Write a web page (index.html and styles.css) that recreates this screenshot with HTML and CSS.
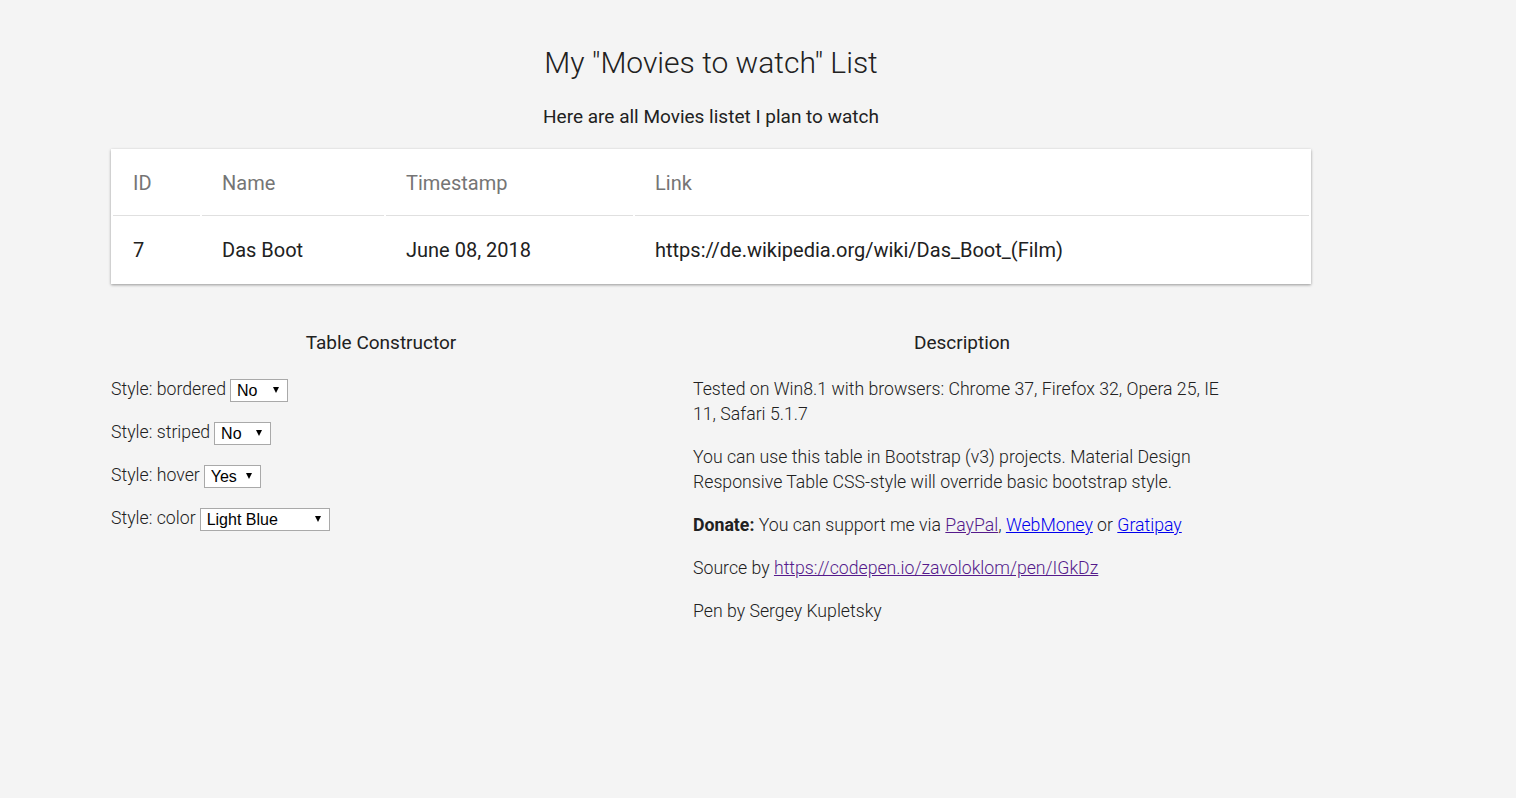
FILE: index.html
```html
<!DOCTYPE html>
<html lang="en">
<head>
<meta charset="utf-8">
<title>Movies to watch</title>
<link rel="stylesheet" href="styles.css">
</head>
<body>
<div class="page">
  <h1 class="title">My "Movies to watch" List</h1>
  <p class="subtitle">Here are all Movies listet I plan to watch</p>

  <div class="table-card">
    <table class="movies">
      <colgroup>
        <col class="c-id"><col class="c-name"><col class="c-time"><col class="c-link">
      </colgroup>
      <thead>
        <tr><th>ID</th><th>Name</th><th>Timestamp</th><th>Link</th></tr>
      </thead>
      <tbody>
        <tr><td>7</td><td>Das Boot</td><td>June 08, 2018</td><td>https://de.wikipedia.org/wiki/Das_Boot_(Film)</td></tr>
      </tbody>
    </table>
  </div>

  <div class="lower">
    <section class="constructor">
      <h2 class="sec-title">Table Constructor</h2>
      <p class="opt">Style: bordered <span class="sel w-no1"><select><option>No</option><option>Yes</option></select></span></p>
      <p class="opt">Style: striped <span class="sel w-no2"><select><option>No</option><option>Yes</option></select></span></p>
      <p class="opt">Style: hover <span class="sel w-yes"><select><option>Yes</option><option>No</option></select></span></p>
      <p class="opt">Style: color <span class="sel w-color"><select><option>Light Blue</option><option>Default</option></select></span></p>
    </section>
    <section class="description">
      <h2 class="sec-title">Description</h2>
      <p>Tested on Win8.1 with browsers: Chrome 37, Firefox 32, Opera 25, IE 11, Safari 5.1.7</p>
      <p>You can use this table in Bootstrap (v3) projects. Material Design Responsive Table CSS-style will override basic bootstrap style.</p>
      <p><b>Donate:</b> You can support me via <a class="visited" href="#paypal">PayPal</a>, <a class="fresh" href="#webmoney">WebMoney</a> or <a class="fresh" href="#gratipay">Gratipay</a></p>
      <p>Source by <a class="visited" href="#codepen">https://codepen.io/zavoloklom/pen/IGkDz</a></p>
      <p>Pen by Sergey Kupletsky</p>
    </section>
  </div>
</div>
</body>
</html>
```

FILE: styles.css
```css
html, body {
  margin: 0;
  padding: 0;
}
body {
  background: #f4f4f4;
  font-family: Roboto, "Noto Sans", sans-serif;
  font-weight: 300;
  color: #212121;
}
.page {
  width: 1200px;
  margin-left: 111px;
  padding-top: 46px;
}
.title {
  margin: 0;
  font-size: 30px;
  font-weight: 300;
  line-height: 34px;
  text-align: center;
}
.subtitle {
  margin: 25px 0 20px;
  font-size: 19px;
  font-weight: 400;
  line-height: 24px;
  text-align: center;
}
.table-card {
  background: #fff;
  box-shadow: 0 1px 3px rgba(0,0,0,0.28), 0 1px 2px rgba(0,0,0,0.12);
}
.movies {
  width: 100%;
  table-layout: fixed;
  border-collapse: separate;
  border-spacing: 2px;
  font-size: 20px;
  font-weight: 400;
}
.c-id { width: 87px; }
.c-name { width: 182px; }
.c-time { width: 247px; }
.movies th, .movies td {
  padding: 20px 20px;
  line-height: 24px;
  text-align: left;
  white-space: nowrap;
}
.movies th {
  color: #757575;
  font-weight: 400;
  border-bottom: 1px solid #e0e0e0;
}
.movies td {
  color: #212121;
}
.lower {
  display: grid;
  grid-template-columns: 540px 538px;
  column-gap: 42px;
  margin-top: 47px;
}
.sec-title {
  margin: 0 0 22px;
  font-size: 19px;
  font-weight: 400;
  line-height: 24px;
  text-align: center;
}
.lower p {
  margin: 0 0 18px;
  font-size: 17.7px;
  line-height: 25px;
}
.opt {
  display: flex;
  align-items: center;
  gap: 4px;
}
.sel {
  position: relative;
  display: inline-block;
  height: 23px;
}
.sel select {
  appearance: none;
  -webkit-appearance: none;
  box-sizing: border-box;
  width: 100%;
  height: 23px;
  margin: 0;
  padding: 0 0 0 6px;
  border: 1px solid #a9a9a9;
  border-radius: 0;
  background: #fff;
  color: #000;
  font-family: "Liberation Sans", Arial, sans-serif;
  font-size: 16px;
  outline: none;
}
.sel::after {
  content: "";
  position: absolute;
  right: 9px;
  top: 9px;
  width: 0;
  height: 0;
  border-left: 3px solid transparent;
  border-right: 3px solid transparent;
  border-top: 6px solid #000;
  pointer-events: none;
}
.w-no1 { width: 58px; }
.w-no2 { width: 57px; }
.w-yes { width: 57px; }
.w-color { width: 130px; }
.description b {
  font-weight: 700;
}
.description a {
  text-decoration: underline;
}
.description a.visited { color: #551a8b; }
.description a.fresh { color: #0000ee; }
```
